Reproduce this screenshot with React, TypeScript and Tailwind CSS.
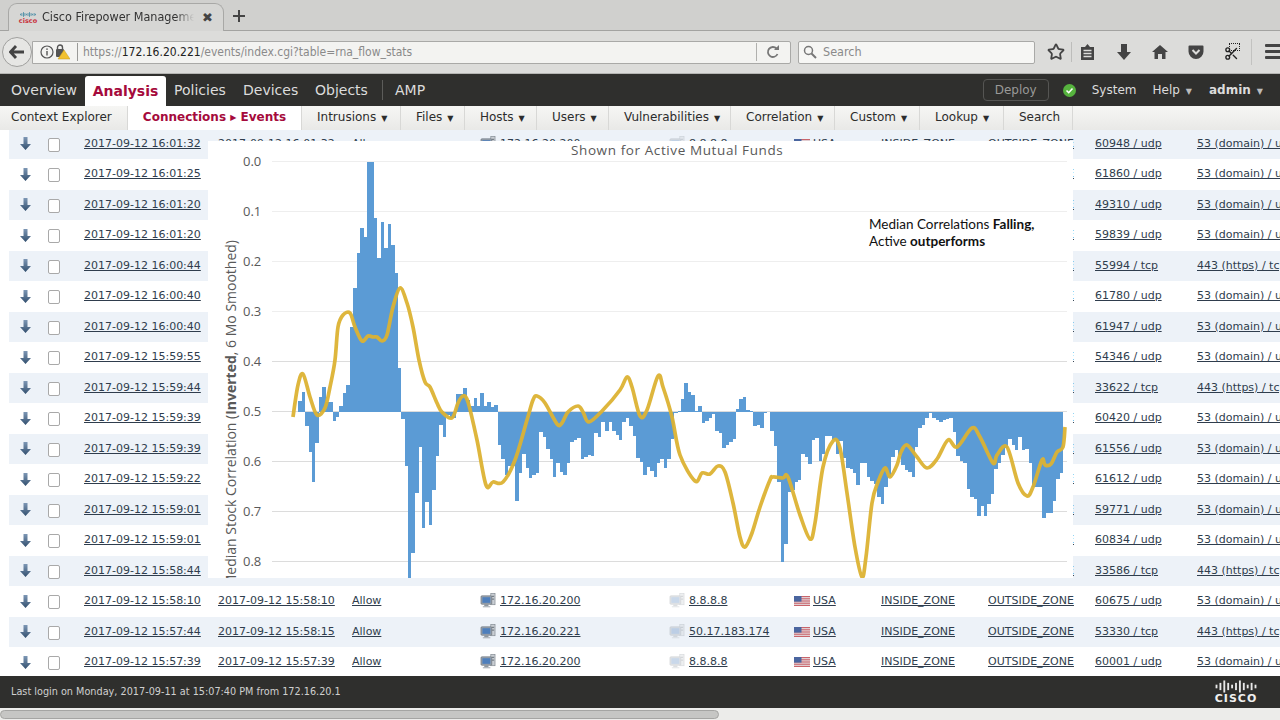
import { Star, Scissors } from 'lucide-react';

const D = '2017-09-12 ';

// first time, second time, source, dest, port, service
const rows = [
  ['16:01:32', '16:01:32', '172.16.20.200', '8.8.8.8', '60948 / udp', '53 (domain) / udp'],
  ['16:01:25', '16:01:25', '172.16.20.200', '8.8.8.8', '61860 / udp', '53 (domain) / udp'],
  ['16:01:20', '16:01:20', '172.16.20.200', '8.8.8.8', '49310 / udp', '53 (domain) / udp'],
  ['16:01:20', '16:01:20', '172.16.20.200', '8.8.8.8', '59839 / udp', '53 (domain) / udp'],
  ['16:00:44', '16:00:44', '172.16.20.221', '50.17.183.174', '55994 / tcp', '443 (https) / tcp'],
  ['16:00:40', '16:00:40', '172.16.20.200', '8.8.8.8', '61780 / udp', '53 (domain) / udp'],
  ['16:00:40', '16:00:40', '172.16.20.200', '8.8.8.8', '61947 / udp', '53 (domain) / udp'],
  ['15:59:55', '15:59:55', '172.16.20.200', '8.8.8.8', '54346 / udp', '53 (domain) / udp'],
  ['15:59:44', '15:59:44', '172.16.20.221', '50.17.183.174', '33622 / tcp', '443 (https) / tcp'],
  ['15:59:39', '15:59:39', '172.16.20.200', '8.8.8.8', '60420 / udp', '53 (domain) / udp'],
  ['15:59:39', '15:59:39', '172.16.20.200', '8.8.8.8', '61556 / udp', '53 (domain) / udp'],
  ['15:59:22', '15:59:22', '172.16.20.200', '8.8.8.8', '61612 / udp', '53 (domain) / udp'],
  ['15:59:01', '15:59:01', '172.16.20.200', '8.8.8.8', '59771 / udp', '53 (domain) / udp'],
  ['15:59:01', '15:59:01', '172.16.20.200', '8.8.8.8', '60834 / udp', '53 (domain) / udp'],
  ['15:58:44', '15:58:44', '172.16.20.221', '50.17.183.174', '33586 / tcp', '443 (https) / tcp'],
  ['15:58:10', '15:58:10', '172.16.20.200', '8.8.8.8', '60675 / udp', '53 (domain) / udp'],
  ['15:57:44', '15:58:15', '172.16.20.221', '50.17.183.174', '53330 / tcp', '443 (https) / tcp'],
  ['15:57:39', '15:57:39', '172.16.20.200', '8.8.8.8', '60001 / udp', '53 (domain) / udp'],
];

// [x start, bar end y], baseline is y=412
const bars = [
  [298, 401], [302, 392], [305, 426], [309, 452], [312, 482], [315, 443], [319, 397], [322, 387], [326, 402], [329, 402],
  [333, 421], [336, 417], [339, 406], [343, 393], [346, 385], [350, 327], [353, 288], [357, 253], [360, 228], [364, 237],
  [367, 162], [374, 218], [377, 258], [381, 222], [384, 248], [388, 224], [391, 245], [395, 273], [398, 368], [401, 419],
  [405, 466], [408, 578], [411, 553], [415, 493], [419, 447], [422, 528], [425, 502], [429, 525], [432, 490], [436, 456],
  [439, 425], [443, 437], [446, 415], [450, 418], [456, 394], [463, 388], [467, 400], [470, 406], [474, 398], [477, 406],
  [480, 393], [484, 406], [487, 402], [491, 407], [494, 405], [498, 445], [501, 459], [505, 475], [508, 466], [515, 501],
  [519, 473], [522, 454], [526, 468], [529, 478], [532, 475], [536, 473], [539, 432], [543, 437], [546, 449], [550, 459],
  [553, 477], [556, 463], [560, 472], [563, 475], [567, 463], [570, 442], [574, 440], [577, 438], [581, 459], [584, 457],
  [588, 455], [591, 456], [594, 433], [598, 437], [601, 422], [605, 431], [609, 422], [612, 431], [616, 435], [619, 440],
  [622, 422], [626, 418], [629, 426], [633, 436], [636, 458], [640, 462], [643, 475], [647, 467], [650, 471], [654, 477],
  [657, 463], [660, 459], [664, 468], [667, 459], [671, 439], [674, 413], [678, 411], [681, 399], [684, 383], [688, 392],
  [691, 395], [695, 411], [698, 406], [702, 423], [705, 421], [709, 418], [712, 414], [715, 431], [719, 433], [722, 448],
  [726, 445], [729, 442], [733, 439], [736, 409], [739, 399], [743, 397], [746, 410], [750, 411], [753, 426], [757, 425],
  [760, 428], [764, 413], [767, 412], [770, 431], [774, 446], [777, 482], [781, 562], [784, 544], [788, 492], [791, 490],
  [795, 482], [798, 480], [801, 454], [805, 457], [808, 464], [812, 440], [815, 438], [819, 461], [822, 454], [825, 436],
  [832, 440], [836, 454], [839, 441], [843, 458], [846, 468], [850, 469], [853, 473], [856, 485], [860, 463], [867, 477],
  [870, 481], [874, 484], [877, 497], [881, 504], [884, 487], [888, 477], [891, 457], [895, 450], [898, 455], [901, 465],
  [905, 470], [908, 472], [912, 477], [915, 447], [918, 428], [922, 425], [925, 418], [929, 413], [932, 418], [936, 420],
  [939, 422], [943, 420], [946, 419], [949, 418], [953, 432], [956, 456], [960, 461], [963, 463], [967, 489], [970, 497],
  [974, 499], [977, 516], [981, 506], [984, 516], [987, 504], [991, 494], [994, 469], [998, 463], [1001, 455], [1005, 448],
  [1008, 439], [1012, 445], [1015, 450], [1018, 437], [1022, 450], [1025, 449], [1029, 463], [1032, 487], [1042, 518],
  [1046, 513], [1053, 501], [1056, 479], [1060, 473], [1063, 412],
];

const linePts = [
  [293, 417], [298, 385], [303, 374], [310, 397], [317, 415], [325, 408], [330, 387], [335, 360], [338, 327], [343, 315],
  [350, 313], [355, 327], [362, 341], [368, 336], [373, 337], [377, 337], [382, 341], [387, 335], [393, 307], [400, 288],
  [407, 303], [413, 327], [419, 360], [425, 382], [430, 387], [437, 403], [442, 412], [452, 418], [458, 403], [463, 396],
  [468, 402], [477, 440], [486, 485], [493, 482], [503, 482], [515, 460], [527, 420], [533, 400], [537, 396], [545, 403],
  [557, 424], [562, 423], [568, 412], [578, 406], [583, 412], [589, 422], [603, 410], [620, 390], [627, 377], [632, 387],
  [640, 416], [647, 410], [658, 376], [663, 387], [672, 417], [680, 455], [695, 481], [702, 473], [710, 474], [718, 466],
  [725, 472], [733, 503], [740, 537], [745, 547], [752, 533], [760, 507], [770, 480], [773, 477], [783, 478], [788, 477],
  [800, 515], [810, 539], [815, 523], [823, 467], [833, 441], [840, 448], [847, 493], [855, 547], [862, 577], [866, 557],
  [872, 503], [878, 482], [885, 468], [890, 477], [897, 465], [901, 452], [907, 445], [917, 457], [927, 468], [937, 459],
  [948, 440], [957, 447], [972, 428], [980, 437], [993, 463], [997, 455], [1007, 447], [1018, 483], [1027, 496], [1033, 487],
  [1042, 460], [1045, 465], [1051, 464], [1057, 452], [1063, 447], [1065, 427],
];

// catmull-rom through the traced points
const smooth = (pts: number[][]) => {
  let d = `M${pts[0][0]} ${pts[0][1]}`;
  for (let i = 0; i < pts.length - 1; i++) {
    const p0 = pts[i - 1] || pts[i];
    const p1 = pts[i];
    const p2 = pts[i + 1];
    const p3 = pts[i + 2] || p2;
    const c1x = p1[0] + (p2[0] - p0[0]) / 6;
    const c1y = p1[1] + (p2[1] - p0[1]) / 6;
    const c2x = p2[0] - (p3[0] - p1[0]) / 6;
    const c2y = p2[1] - (p3[1] - p1[1]) / 6;
    d += ` C${c1x.toFixed(1)} ${c1y.toFixed(1)} ${c2x.toFixed(1)} ${c2y.toFixed(1)} ${p2[0]} ${p2[1]}`;
  }
  return d;
};

const ticks = ['0.0', '0.1', '0.2', '0.3', '0.4', '0.5', '0.6', '0.7', '0.8'];

const Chart = () => (
  <div className="absolute left-[208px] top-[141px] w-[865px] h-[437px] bg-white">
    <svg viewBox="208 141 865 437" width="865" height="437" className="block font-['Open_Sans',sans-serif]">
      <text x="571" y="155" fontSize="13.5" fill="#595959" letterSpacing="0.6">Shown for Active Mutual Funds</text>
      {ticks.map((t, i) => (
        <g key={t}>
          <line x1="272" x2="1067" y1={161.5 + i * 50} y2={161.5 + i * 50} stroke={i < 4 ? '#eeeeee' : '#dcdcdc'} strokeWidth="1" />
          <text x="243" y={166 + i * 50} fontSize="13" fill="#595959">{t}</text>
        </g>
      ))}
      <text x="236" y="240" fontSize="14" fill="#595959" textAnchor="end" transform="rotate(-90 236 240)">
        Median Stock Correlation (<tspan fontWeight="700">Inverted</tspan>, 6 Mo Smoothed)
      </text>
      <g fill="#5b9bd5" shapeRendering="crispEdges">
        {bars.map((b, i) => {
          const end = bars[i + 1] ? bars[i + 1][0] : 1063;
          const top = Math.min(b[1], 412);
          return <rect key={b[0]} x={b[0]} y={top} width={end - b[0]} height={Math.abs(b[1] - 412)} />;
        })}
      </g>
      <path d={smooth(linePts)} fill="none" stroke="#dcb233" strokeWidth="3.7" strokeLinejoin="round" strokeOpacity="0.95" />
      <text fontSize="13.5" fill="#111111" className="font-['Lato',sans-serif]">
        <tspan x="869" y="229">Median Correlations <tspan fontWeight="700">Falling,</tspan></tspan>
        <tspan x="869" y="246">Active <tspan fontWeight="700">outperforms</tspan></tspan>
      </text>
    </svg>
  </div>
);

const DownArrow = () => (
  <svg width="11" height="13" viewBox="0 0 11 13">
    <defs>
      <linearGradient id="arrowFill" x1="0" y1="0" x2="0" y2="1">
        <stop offset="0" stopColor="#7d97b5" />
        <stop offset="1" stopColor="#33506f" />
      </linearGradient>
    </defs>
    <path d="M3.5 0H7.5V7H11L5.5 13L0 7H3.5Z" fill="url(#arrowFill)" />
  </svg>
);

const Host = ({ faded }: { faded?: boolean }) => (
  <svg width="16" height="15" viewBox="0 0 16 16" className={faded ? 'opacity-30 shrink-0 mt-[-1px]' : 'shrink-0 mt-[-1px]'}>
    <rect x="11" y="0.5" width="4.5" height="12" fill="#c9ced3" stroke="#7d858d" strokeWidth="0.7" />
    <rect x="12" y="3" width="2.5" height="1" fill="#5f6870" />
    <rect x="12" y="6" width="2.5" height="1" fill="#5f6870" />
    <rect x="0.5" y="3" width="11.5" height="9" rx="1" fill="#9aa3ac" stroke="#68717a" strokeWidth="0.7" />
    <rect x="2" y="4.5" width="8.5" height="6" fill="#4e7fbc" />
    <rect x="4" y="12" width="4.5" height="2.5" fill="#8f979f" />
    <rect x="2.5" y="14" width="8" height="1.3" fill="#b1b7bd" />
  </svg>
);

const Flag = () => (
  <svg width="16" height="10" viewBox="0 0 16 10" className="shrink-0">
    <rect width="16" height="10" fill="#e8e8ec" />
    <rect y="0" width="16" height="1.2" fill="#c9646a" />
    <rect y="2.2" width="16" height="1.2" fill="#c9646a" />
    <rect y="4.4" width="16" height="1.2" fill="#c9646a" />
    <rect y="6.6" width="16" height="1.2" fill="#c9646a" />
    <rect y="8.8" width="16" height="1.2" fill="#c9646a" />
    <rect width="7.5" height="5.6" fill="#4a659f" />
  </svg>
);

const link = 'underline text-[#2f3d4d] whitespace-nowrap';

const Row = ({ r, i }: { r: string[]; i: number }) => (
  <div className={`flex items-center h-[30.5px] ml-[9px] text-[11px] shrink-0 ${i % 2 === 0 ? 'bg-[#edf2f8]' : 'bg-white'}`}>
    <div className="w-[33px] pl-[11px] flex shrink-0"><DownArrow /></div>
    <div className="w-[42px] pl-[6px] flex shrink-0">
      <span className="w-[12px] h-[14px] mt-[2px] block rounded-[2px] border border-[#a9a9a9] bg-white" />
    </div>
    <div className="w-[134px] shrink-0"><span className={link}>{D + r[0]}</span></div>
    <div className="w-[134px] shrink-0"><span className={link}>{D + r[1]}</span></div>
    <div className="w-[128px] shrink-0"><span className={link}>Allow</span></div>
    <div className="w-[189px] flex items-center gap-[4px] shrink-0"><Host /><span className={link}>{r[2]}</span></div>
    <div className="w-[125px] flex items-center gap-[4px] shrink-0"><Host faded /><span className={link}>{r[3]}</span></div>
    <div className="w-[87px] flex items-center gap-[3px] shrink-0"><Flag /><span className={link}>USA</span></div>
    <div className="w-[107px] shrink-0"><span className={link}>INSIDE_ZONE</span></div>
    <div className="w-[107px] shrink-0"><span className={link}>OUTSIDE_ZONE</span></div>
    <div className="w-[102px] shrink-0"><span className={link}>{r[4]}</span></div>
    <div className="w-[83px] shrink-0 overflow-hidden"><span className={link}>{r[5]}</span></div>
  </div>
);

const CiscoBars = ({ className, color, w, h }: { className?: string; color: string; w: number; h: number }) => {
  const hs = [3, 6, 10, 6, 3, 6, 10, 6, 3, 6, 3];
  return (
    <svg width={w} height={h} viewBox="0 0 44 14" className={className}>
      {hs.map((v, i) => (
        <rect key={i} x={i * 4.2} y={7 - v * 0.65} width="2" height={v * 1.3} fill={color} />
      ))}
    </svg>
  );
};

const Favicon = () => (
  <div className="flex flex-col items-center w-[16px] shrink-0">
    <CiscoBars color="#2a7d9c" w={16} h={7} />
    <span className="text-[6.5px] leading-[7px] font-bold text-[#c8303a]">cisco</span>
  </div>
);

const sub = [
  { label: 'Intrusions', w: 'w-[99px]', caret: true },
  { label: 'Files', w: 'w-[64px]', caret: true },
  { label: 'Hosts', w: 'w-[72px]', caret: true },
  { label: 'Users', w: 'w-[72px]', caret: true },
  { label: 'Vulnerabilities', w: 'w-[122px]', caret: true },
  { label: 'Correlation', w: 'w-[104px]', caret: true },
  { label: 'Custom', w: 'w-[85px]', caret: true },
  { label: 'Lookup', w: 'w-[84px]', caret: true },
  { label: 'Search', w: 'w-[70px]', caret: false },
];

const App = () => {
  return (
    <div className="relative w-[1280px] h-[720px] overflow-hidden flex flex-col bg-white font-['DejaVu_Sans',sans-serif]">
      {/* browser tabs */}
      <div className="h-[31px] shrink-0 bg-[#d0d0ce] border-b border-[#a3a3a1] flex items-end pl-[8px] relative">
        <div className="w-[216px] h-[28px] -mb-px bg-[#d6d6d4] border border-b-0 border-[#a8a8a6] rounded-t-[9px] flex items-center pl-[11px] pr-[10px] gap-[6px] z-10">
          <Favicon />
          <div className="w-[152px] overflow-hidden whitespace-nowrap text-[12.5px] [font-stretch:condensed] text-[#333] [mask-image:linear-gradient(to_right,black_88%,transparent)]">Cisco Firepower Management Center</div>
          <span className="text-[13px] font-bold text-[#444] ml-[2px]">✖</span>
        </div>
        <svg width="14" height="14" viewBox="0 0 14 14" className="ml-[8px] mb-[7px]">
          <path d="M7 1V13M1 7H13" stroke="#444" strokeWidth="2" />
        </svg>
      </div>

      {/* url bar */}
      <div className="h-[43px] shrink-0 bg-[#dcdcda] border-b border-[#b5b5b3] flex items-center relative pl-[32px]">
        <div className="w-[759px] h-[23px] bg-[#f3f3f1] border border-[#a9a9a7] rounded-r-[2px] flex items-center text-[12px] [font-stretch:condensed] text-[#8a8a8a] pl-[8px]">
          <svg width="14" height="14" viewBox="0 0 14 14" className="ml-[-1px]">
            <circle cx="7" cy="7" r="6" fill="none" stroke="#555" strokeWidth="1.2" />
            <rect x="6.3" y="6" width="1.4" height="4.5" fill="#555" />
            <rect x="6.3" y="3.4" width="1.4" height="1.5" fill="#555" />
          </svg>
          <svg width="15" height="16" viewBox="0 0 15 16" className="ml-[1px]">
            <rect x="1" y="5" width="8" height="8" rx="1" fill="#555" />
            <path d="M2.5 5V3.5a2.5 2.5 0 0 1 5 0V5" fill="none" stroke="#555" strokeWidth="1.4" />
            <path d="M9 6L15 15H3Z" fill="#f2c12e" stroke="#c49a1a" strokeWidth="0.5" />
          </svg>
          <span className="w-px h-[18px] bg-[#9a9a98] ml-[7px] mr-[5px]" />
          <span>https://<span className="text-[#222]">172.16.20.221</span>/events/index.cgi?table=rna_flow_stats</span>
          <span className="w-px h-[18px] bg-[#b0b0ae] ml-auto mr-[9px]" />
          <svg width="14" height="14" viewBox="0 0 14 14" className="mr-[10px]">
            <path d="M11.5 9A5 5 0 1 1 10.5 3.5" fill="none" stroke="#777" strokeWidth="1.8" />
            <path d="M8 5H13V0Z" fill="#777" />
          </svg>
        </div>
        <div className="ml-[7px] w-[237px] h-[23px] bg-[#f6f6f4] border border-[#a9a9a7] rounded-[2px] flex items-center pl-[4px] gap-[6px] text-[12.5px] [font-stretch:condensed] text-[#8a8a8a]">
          <svg width="14" height="14" viewBox="0 0 14 14">
            <circle cx="5.5" cy="5.5" r="4" fill="none" stroke="#777" strokeWidth="1.5" />
            <path d="M8.5 8.5L13 13" stroke="#777" strokeWidth="2" />
          </svg>
          <span>Search</span>
        </div>
        <div className="ml-[12px] flex items-center h-[30px]">
          <Star size={18} strokeWidth={2.4} color="#444" />
          <span className="w-px h-[20px] bg-[#bdbdbb] ml-[6px] mr-[8px]" />
          <svg width="15" height="18" viewBox="0 0 15 18">
            <path d="M1 4H5L7.5 1L10 4H14V17H1Z" fill="#444" />
            <path d="M3.5 7.5H11.5M3.5 10.5H11.5M3.5 13.5H11.5" stroke="#dcdcda" strokeWidth="1.3" />
          </svg>
          <svg width="16" height="18" viewBox="0 0 16 18" className="ml-[21px]">
            <path d="M5 1H11V9H15L8 17L1 9H5Z" fill="#444" />
          </svg>
          <svg width="16" height="16" viewBox="0 0 16 16" className="ml-[20px]">
            <path d="M8 1L16 8H13.5V15H10V10H6V15H2.5V8H0Z" fill="#444" />
          </svg>
          <svg width="16" height="16" viewBox="0 0 16 16" className="ml-[20px]">
            <path d="M1.5 1.5H14.5A1 1 0 0 1 15.5 2.5V7.5A7.5 7.5 0 0 1 0.5 7.5V2.5A1 1 0 0 1 1.5 1.5Z" fill="#444" />
            <path d="M4.5 6L8 9.5L11.5 6" fill="none" stroke="#dcdcda" strokeWidth="2" />
          </svg>
          <div className="relative ml-[20px] w-[16px] h-[18px]">
            <Scissors size={15} strokeWidth={2.2} color="#222" className="absolute left-0 top-[3px]" />
            <div className="absolute right-0 top-0 w-[11px] h-[8px] border border-dotted border-[#222]" />
          </div>
        </div>
        <span className="absolute left-[1251px] top-[8px] w-px h-[26px] bg-[#c2c2c0]" />
        <div className="absolute left-[1265px] top-[13px] w-[20px] flex flex-col gap-[3px]">
          <span className="h-[3px] bg-[#444] rounded-[1px]" />
          <span className="h-[3px] bg-[#444] rounded-[1px]" />
          <span className="h-[3px] bg-[#444] rounded-[1px]" />
        </div>
        {/* back button */}
        <div className="absolute left-[2px] top-[6px] w-[30px] h-[30px] rounded-full bg-[#e6e6e4] border border-[#a0a09e] flex items-center justify-center">
          <svg width="16" height="14" viewBox="0 0 16 14">
            <path d="M7 1L1.5 7L7 13M2 7H15" fill="none" stroke="#444" strokeWidth="2.8" />
          </svg>
        </div>
      </div>

      {/* main nav */}
      <div className="h-[32px] shrink-0 bg-[#2f2f2d] flex items-end pl-[11px] text-[14px] text-[#dcdcdc]">
        <span className="h-[32px] leading-[33px] w-[74px]">Overview</span>
        <span className="h-[30px] w-[81px] leading-[30px] text-center bg-white rounded-t-[3px] font-bold text-[#a50a3c]">Analysis</span>
        <span className="h-[32px] leading-[33px] ml-[8px] w-[69px]">Policies</span>
        <span className="h-[32px] leading-[33px] w-[72px]">Devices</span>
        <span className="h-[32px] leading-[33px] w-[67px]">Objects</span>
        <span className="w-px h-[20px] mb-[6px] bg-[#5c5c5a]" />
        <span className="h-[32px] leading-[33px] ml-[12px]">AMP</span>
        <div className="ml-auto flex items-center h-[32px] text-[12px] pr-[17px]">
          <span className="w-[66px] h-[22px] rounded-[4px] border border-[#555553] text-[#9a9a98] flex items-center justify-center">Deploy</span>
          <span className="ml-[14px] w-[13px] h-[13px] rounded-full bg-[#56b33e] flex items-center justify-center">
            <svg width="9" height="9" viewBox="0 0 9 9"><path d="M1.5 4.5L3.7 6.7L7.5 2.5" fill="none" stroke="#fff" strokeWidth="1.6" /></svg>
          </span>
          <span className="ml-[16px]">System</span>
          <span className="ml-[16px]">Help<span className="ml-[6px] text-[8px] text-[#bbb]">▼</span></span>
          <span className="ml-[17px] font-bold">admin<span className="ml-[6px] text-[8px] font-normal text-[#bbb]">▼</span></span>
        </div>
      </div>

      {/* sub nav */}
      <div className="h-[24px] shrink-0 bg-gradient-to-b from-[#f6f6f4] to-[#e9e9e7] flex items-stretch text-[12px] text-[#2c2c2c] z-10">
        <span className="w-[127px] pl-[11px] leading-[23px] whitespace-nowrap">Context Explorer</span>
        <span className="w-[174px] bg-white border-l border-[#d8d8d6] text-center leading-[23px] font-bold text-[#a50a3c] whitespace-nowrap">Connections <span className="text-[8px] align-[1px]">▶</span> Events</span>
        {sub.map((s) => (
          <span key={s.label} className={`${s.w} pl-[15px] border-l border-[#d8d8d6] last:border-r leading-[23px] whitespace-nowrap`}>
            {s.label}{s.caret ? <span className="ml-[5px] text-[8px]">▼</span> : null}
          </span>
        ))}
      </div>

      {/* events table */}
      <div className="flex-1 min-h-0 overflow-hidden flex flex-col">
        <div className="mt-[-1.5px] flex flex-col">
          {rows.map((r, i) => <Row key={i} r={r} i={i} />)}
        </div>
      </div>

      {/* footer */}
      <div className="h-[32px] shrink-0 bg-[#2f2f2d] flex items-center pl-[11px] pr-[21px] text-[9.7px] text-[#cfcfcf] z-10">
        <span>Last login on Monday, 2017-09-11 at 15:07:40 PM from 172.16.20.1</span>
        <div className="ml-auto flex flex-col items-center">
          <CiscoBars color="#e8e8e8" w={46} h={13} />
          <span className="text-[11px] leading-[11px] font-bold tracking-[1px] text-[#f0f0f0]">CISCO</span>
        </div>
      </div>

      {/* horizontal scrollbar */}
      <div className="h-[12px] shrink-0 bg-[#ececea] pt-[2px]">
        <div className="w-[719px] h-[9px] rounded-[5px] bg-[#c6c6c4] border border-[#a5a5a3]" />
      </div>

      <Chart />
    </div>
  );
};

export default App;
